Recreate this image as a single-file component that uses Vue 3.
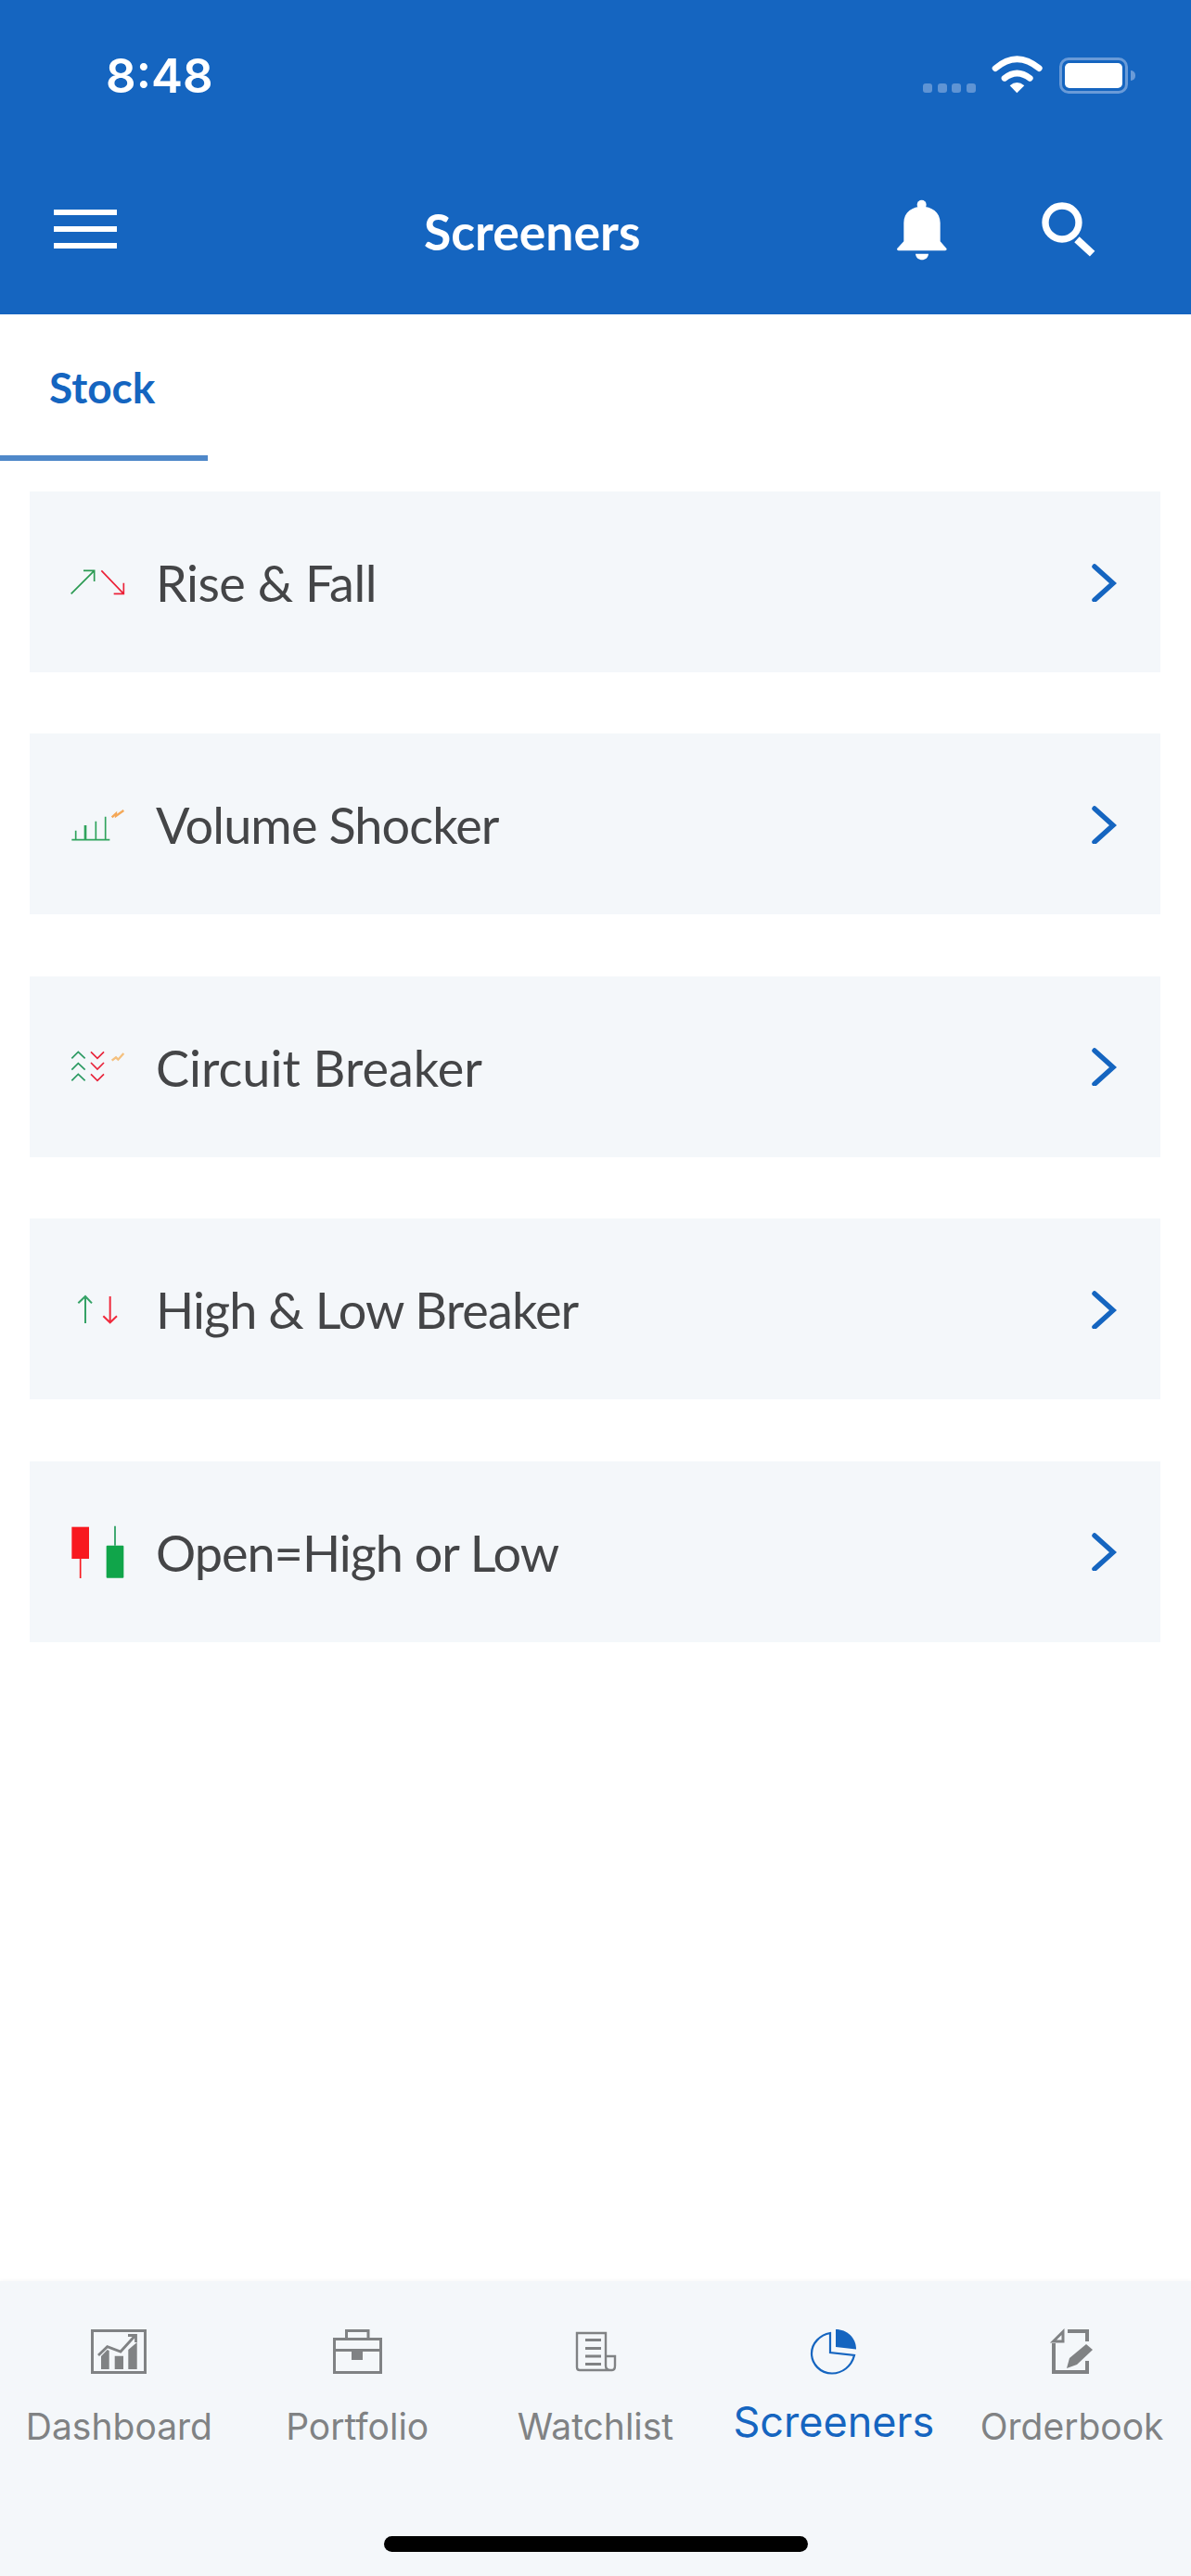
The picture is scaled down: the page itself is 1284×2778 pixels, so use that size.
<script setup>
const rows = [
  { label: 'Rise & Fall', view: '0 8 330 270', icon: 'rise', track: '-0.5px' },
  { label: 'Volume Shocker', view: '0 -20 330 270', icon: 'volume', track: '-0.9px' },
  { label: 'Circuit Breaker', view: '0 -16 330 270', icon: 'circuit', track: '0' },
  { label: 'High & Low Breaker', view: '0 -10 330 270', icon: 'high', track: '-0.9px' },
  { label: 'Open=High or Low', view: '0 -8 330 270', icon: 'open', track: '-1px' }
]
const tabs = [
  { label: 'Dashboard', view: '88 2508 80 56', icon: 'dash' },
  { label: 'Portfolio', view: '345 2508 80 56', icon: 'case' },
  { label: 'Watchlist', view: '602 2508 80 56', icon: 'list' },
  { label: 'Screeners', view: '859 2508 80 56', icon: 'pie', active: true },
  { label: 'Orderbook', view: '1116 2508 80 56', icon: 'order' }
]
</script>

<template>
  <div class="phone">
    <header class="header">
      <div class="status">
        <span class="time">8:48</span>
        <div class="dots"><i></i><i></i><i></i><i></i></div>
        <svg class="wifi" viewBox="320 50 180 140" width="60" height="46.7">
          <path d="M338 100 Q408 40 480 100" fill="none" stroke="#fff" stroke-width="20" stroke-linecap="round" />
          <path d="M368 132 Q408 100 450 132" fill="none" stroke="#fff" stroke-width="20" stroke-linecap="round" />
          <path d="M385 156 Q408 136 432 156 L408 180 Z" fill="#fff" />
        </svg>
        <div class="battery"><span class="cell"></span></div>
        <span class="nub"></span>
      </div>
      <div class="bar">
        <div class="burger"><i></i><i></i><i></i></div>
        <span class="title">Screeners</span>
        <svg class="bell" viewBox="10 515 180 210" width="60" height="70">
          <circle cx="102" cy="541" r="15" fill="#fff" />
          <path d="M44 660 V600 C44 530 162 530 162 600 V660 L183 684 Q183 690 178 690 H27 Q22 690 22 684 Z" fill="#fff" />
          <path d="M82 700 H124 C122 726 84 726 82 700 Z" fill="#fff" />
        </svg>
        <svg class="search" viewBox="480 520 190 190" width="63.3" height="63.3">
          <circle cx="552" cy="595" r="54" fill="none" stroke="#fff" stroke-width="22" />
          <path d="M600 650 L650 696" fill="none" stroke="#fff" stroke-width="24" />
        </svg>
      </div>
    </header>

    <div class="tabs"><div class="tab">Stock</div></div>

    <main class="list">
      <div v-for="row in rows" :key="row.label" class="row">
        <svg class="row-icon" :viewBox="row.view" width="110" height="90" fill="none" stroke-width="5">
          <g v-if="row.icon === 'rise'">
            <path d="M80 180 L155 105 M120 105 H155 V140" stroke="#2b9a52" />
            <path d="M178 105 L250 180 M218 180 H250 V145" stroke="#ec2238" />
          </g>
          <g v-else-if="row.icon === 'volume'">
            <path d="M82 165 H205 M95 165 V135 M160 165 V105 M191 165 V90" stroke="#2fa35c" />
            <path d="M126 165 V118" stroke="#2fa35c" stroke-width="8" />
            <path d="M212 92 L225 80 V88 L250 70" stroke="#f4a858" stroke-width="7" />
          </g>
          <g v-else-if="row.icon === 'circuit'">
            <path d="M82 93 L103 72 L125 93 M82 130 L103 109 L125 130 M82 165 L103 144 L125 165" stroke="#2b9a62" />
            <path d="M144 72 L165 93 L186 72 M144 107 L165 128 L186 107 M144 144 L165 165 L186 144" stroke="#e8233a" />
            <path d="M212 100 L225 90 L232 97 L250 77" stroke="#f4c07e" stroke-width="7" />
          </g>
          <g v-else-if="row.icon === 'high'">
            <path d="M126 170 V83 M103 105 L126 83 L147 105" stroke="#35a266" stroke-width="6" />
            <path d="M206 83 V168 M184 147 L206 168 L228 147" stroke="#f02a3c" stroke-width="6" />
          </g>
          <g v-else>
            <rect x="82" y="48" width="56" height="103" fill="#f8191f" />
            <path d="M110 151 V214" stroke="#f8191f" stroke-width="5" />
            <rect x="194" y="108" width="56" height="105" rx="3" fill="#10a54a" />
            <path d="M222 45 V108" stroke="#1f9a58" stroke-width="5" />
          </g>
        </svg>
        <span class="row-label" :style="{ letterSpacing: row.track }">{{ row.label }}</span>
        <svg class="chevron" viewBox="0 0 30 42" width="30" height="42">
          <path d="M6 4 L26 22 L6 40" fill="none" stroke="#1565c0" stroke-width="5.5" stroke-linecap="round" />
        </svg>
      </div>
    </main>

    <nav class="nav">
      <div v-for="tab in tabs" :key="tab.label" class="nav-item" :class="{ active: tab.active }">
        <svg :viewBox="tab.view" width="80" height="56" fill="none" stroke="#808284">
          <g v-if="tab.icon === 'dash'" stroke-width="3">
            <rect x="99.5" y="2513.5" width="57" height="45" />
            <path d="M109 2541 L115.7 2534 L117.7 2535 V2555 H109 Z M123.7 2540.7 H133 V2555 H123.7 Z M138.3 2534 L147.7 2526 V2555 H138.3 Z" fill="#808284" stroke="none" />
            <path d="M106 2540 L115.7 2530.7 L130 2536 L145 2519.5" stroke-width="2.8" />
            <path d="M138 2518.5 H146.5 V2526" stroke-width="2.8" />
          </g>
          <g v-else-if="tab.icon === 'case'" stroke-width="3">
            <rect x="360.5" y="2522.5" width="50" height="36" />
            <path d="M373.5 2522 V2513.5 H397 V2522 M360 2534.5 H411" />
            <rect x="379" y="2535" width="12" height="10" fill="#808284" stroke="none" />
          </g>
          <g v-else-if="tab.icon === 'list'" stroke-width="2.4">
            <path d="M653 2541 V2516 H622 V2553 Q622 2556 625 2556 H660 Q663 2556 663 2551 V2541 H653 V2551 Q653 2556 658 2556" />
            <path d="M631 2523.5 H648 M631 2532.5 H648 M631 2541 H648 M631 2549.5 H648" stroke-width="2.8" />
          </g>
          <g v-else-if="tab.icon === 'pie'" stroke="#1565c0">
            <path d="M901 2512 V2531 L923 2533.5 C923 2521 913 2512 901 2512 Z" fill="#1565c0" stroke="none" />
            <path d="M895 2516 V2537 L921 2540 C918 2552 908 2559.5 897 2559.5 C884 2559.5 875 2549 875 2538 C875 2527 884 2518 895 2516 Z" stroke-width="2.2" />
          </g>
          <g v-else stroke-width="4">
            <path d="M1151 2514 H1172 V2525 M1136 2527 V2558 H1172 V2546" />
            <path d="M1135.5 2525 L1146 2514.5 V2525 Z" stroke-width="3" />
            <path d="M1150 2554 L1153 2543 L1171 2528 L1178 2534 L1161 2550 Z" fill="#808284" stroke="none" />
          </g>
        </svg>
        <span class="nav-label">{{ tab.label }}</span>
      </div>
      <span class="home"></span>
    </nav>
  </div>
</template>

<style>
html, body { margin: 0; background: #fff; }
</style>

<style scoped>
.phone {
  width: 1284px;
  height: 2778px;
  display: flex;
  flex-direction: column;
  background: #fff;
  font-family: Lato, "Noto Sans", sans-serif;
  overflow: hidden;
}
.header {
  height: 339px;
  flex: none;
  background: #1565c0;
  color: #fff;
  box-sizing: border-box;
}
.status {
  height: 130px;
  display: flex;
  align-items: flex-start;
  padding: 0 60px 0 114px;
  box-sizing: border-box;
}
.time {
  font-family: Inter, sans-serif;
  font-weight: 600;
  font-size: 51px;
  line-height: 60px;
  margin-top: 52px;
  width: 881px;
}
.dots { display: flex; gap: 5.5px; margin-top: 90px; width: 75px; flex: none; }
.dots i { width: 10px; height: 10px; border-radius: 3px; background: #5f94d4; }
.wifi { flex: none; margin-top: 57px; margin-left: -3px; margin-right: 15px; }
.battery {
  flex: none;
  margin-top: 62px;
  width: 74px;
  height: 39px;
  box-sizing: border-box;
  border: 3px solid #6a9bd8;
  border-radius: 10px;
  padding: 3px;
}
.cell { display: block; height: 100%; background: #fff; border-radius: 5px; }
.nub { flex: none; width: 5px; height: 11px; margin: 76px 0 0 3px; background: #6a9bd8; border-radius: 0 6px 6px 0; }
.bar {
  height: 209px;
  display: flex;
  align-items: flex-start;
  padding-left: 58px;
}
.burger { width: 68px; margin-top: 96px; display: flex; flex-direction: column; gap: 12px; flex: none; }
.burger i { display: block; height: 6px; background: #fff; }
.title {
  font-weight: 700;
  font-size: 53.5px;
  line-height: 62px;
  margin: 88px 0 0 331px;
  width: 231px;
  flex: none;
  white-space: nowrap;
}
.bell { flex: none; margin: 82px 0 0 275px; }
.search { flex: none; margin: 85px 0 0 98px; }

.tabs { height: 158px; flex: none; }
.tab {
  width: 224px;
  height: 158px;
  box-sizing: border-box;
  padding: 51px 0 0 53px;
  color: #1565c0;
  font-weight: 700;
  font-size: 46px;
  line-height: 56px;
  border-bottom: 6px solid #4f88c9;
}

.list {
  display: grid;
  grid-auto-rows: 195px;
  row-gap: 66.4px;
  padding: 33px 33px 0 32px;
}
.row {
  display: flex;
  align-items: center;
  background: #f4f7fa;
  padding-left: 18px;
  padding-right: 47px;
}
.row-icon { flex: none; margin-right: 8px; }
.row-label {
  flex: 1;
  font-size: 54px;
  line-height: 64px;
  margin-top: 3px;
  color: #444547;
}
.chevron { flex: none; }

.nav {
  position: relative;
  margin-top: auto;
  height: 318px;
  flex: none;
  display: grid;
  grid-template-columns: repeat(5, 1fr);
  background: #f4f7fa;
  box-shadow: 0 -2px 3px rgba(0, 0, 0, 0.02);
}
.nav-item {
  display: flex;
  flex-direction: column;
  align-items: center;
  padding-top: 48px;
}
.nav-label {
  font-family: Inter, sans-serif;
  font-size: 39px;
  line-height: 46px;
  margin-top: 30px;
  color: #808284;
  white-space: nowrap;
}
.active .nav-label { color: #1565c0; font-size: 45px; line-height: 50px; margin-top: 23px; }
.home {
  position: absolute;
  left: 414px;
  top: 275px;
  width: 457px;
  height: 17px;
  border-radius: 9px;
  background: #000;
}
</style>
